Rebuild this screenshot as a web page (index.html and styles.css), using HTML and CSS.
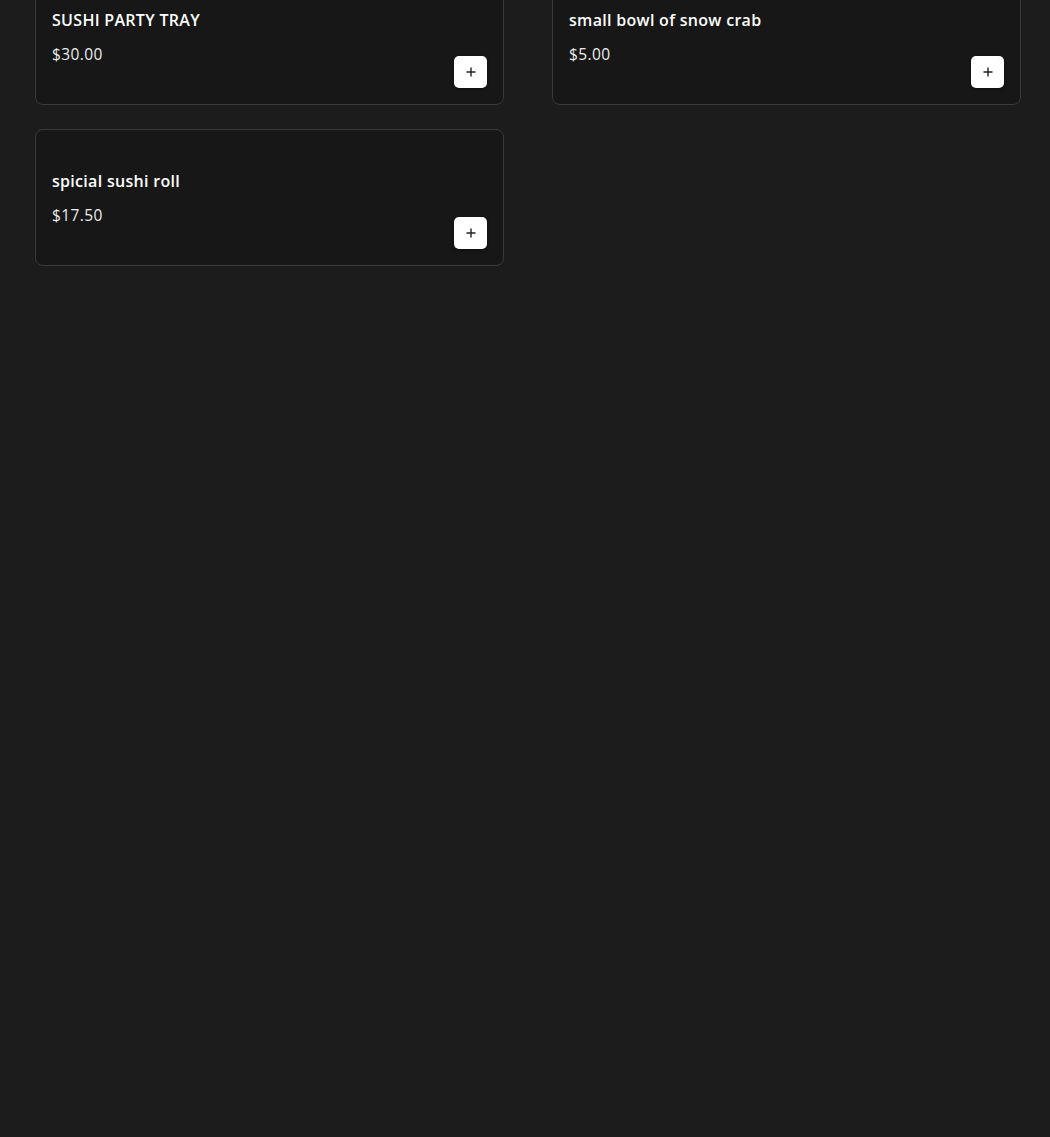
FILE: index.html
```html
<!DOCTYPE html>
<html lang="en">
<head>
<meta charset="utf-8">
<title>Menu</title>
<link rel="stylesheet" href="styles.css">
</head>
<body>
<main class="menu">
  <div class="card">
    <div class="spacer"></div>
    <h3 class="name">SUSHI PARTY TRAY</h3>
    <div class="row">
      <span class="price">$30.00</span>
      <button class="add" aria-label="Add"><svg width="12" height="12" viewBox="0 0 12 12"><path d="M6 1.5v9M1.5 6h9" stroke="#222" stroke-width="1.4" fill="none"/></svg></button>
    </div>
  </div>
  <div class="card">
    <div class="spacer"></div>
    <h3 class="name">small bowl of snow crab</h3>
    <div class="row">
      <span class="price">$5.00</span>
      <button class="add" aria-label="Add"><svg width="12" height="12" viewBox="0 0 12 12"><path d="M6 1.5v9M1.5 6h9" stroke="#222" stroke-width="1.4" fill="none"/></svg></button>
    </div>
  </div>
  <div class="card">
    <div class="spacer"></div>
    <h3 class="name">spicial sushi roll</h3>
    <div class="row">
      <span class="price">$17.50</span>
      <button class="add" aria-label="Add"><svg width="12" height="12" viewBox="0 0 12 12"><path d="M6 1.5v9M1.5 6h9" stroke="#222" stroke-width="1.4" fill="none"/></svg></button>
    </div>
  </div>
</main>
</body>
</html>
```
FILE: styles.css
```css
html, body {
  margin: 0;
  padding: 0;
  background: #1c1c1c;
  height: 100%;
}
body {
  font-family: "Open Sans", "Liberation Sans", sans-serif;
  color: #fff;
  overflow: hidden;
}
.menu {
  display: grid;
  grid-template-columns: 469px 469px;
  column-gap: 48px;
  row-gap: 24px;
  padding: 0 29px 0 35px;
  margin-top: -32px;
}
.card {
  background: #171717;
  border: 1px solid #3a3a3a;
  border-radius: 8px;
  padding: 16px;
  display: flex;
  flex-direction: column;
  height: 137px;
  box-sizing: border-box;
}
.spacer {
  height: 23px;
}
.name {
  margin: 0;
  font-size: 16px;
  line-height: 24px;
  font-weight: 600;
  letter-spacing: 0.3px;
  color: #fff;
}
.row {
  margin-top: 12px;
  display: flex;
  justify-content: space-between;
  height: 44px;
}
.price {
  font-size: 15.5px;
  line-height: 20px;
  letter-spacing: 0.4px;
  color: #ececec;
  align-self: flex-start;
}
.add {
  align-self: flex-end;
  width: 33px;
  height: 32px;
  border: none;
  border-radius: 5px;
  background: #fff;
  display: flex;
  align-items: center;
  justify-content: center;
  padding: 0;
  box-shadow: 0 1px 3px rgba(0,0,0,0.5);
}
.add svg {
  display: block;
}
```
